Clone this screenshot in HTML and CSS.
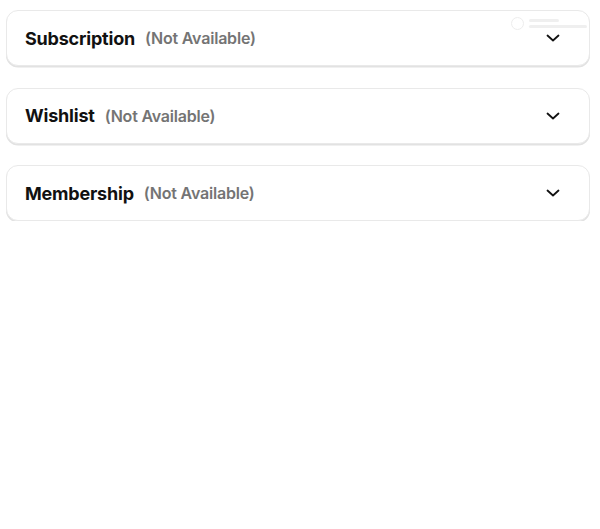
FILE: index.html
```html
<!DOCTYPE html>
<html lang="en">
<head>
<meta charset="utf-8">
<title>Account sections</title>
<link rel="stylesheet" href="styles.css">
</head>
<body>
<main class="list">
  <section class="card">
    <div class="card-head">
      <h2 class="title">Subscription</h2>
      <span class="status">(Not Available)</span>
      <svg class="chevron" width="14" height="8" viewBox="0 0 14 8" aria-hidden="true"><path d="M1.5 1.5 L7 6.5 L12.5 1.5" fill="none" stroke="#111" stroke-width="1.8" stroke-linecap="round" stroke-linejoin="round"/></svg>
    </div>
    <div class="watermark" aria-hidden="true">
      <span class="wm-icon"></span>
      <span class="wm-text"><span class="wm-line short"></span><span class="wm-line"></span></span>
    </div>
  </section>
  <section class="card">
    <div class="card-head">
      <h2 class="title">Wishlist</h2>
      <span class="status">(Not Available)</span>
      <svg class="chevron" width="14" height="8" viewBox="0 0 14 8" aria-hidden="true"><path d="M1.5 1.5 L7 6.5 L12.5 1.5" fill="none" stroke="#111" stroke-width="1.8" stroke-linecap="round" stroke-linejoin="round"/></svg>
    </div>
  </section>
  <section class="card">
    <div class="card-head">
      <h2 class="title">Membership</h2>
      <span class="status">(Not Available)</span>
      <svg class="chevron" width="14" height="8" viewBox="0 0 14 8" aria-hidden="true"><path d="M1.5 1.5 L7 6.5 L12.5 1.5" fill="none" stroke="#111" stroke-width="1.8" stroke-linecap="round" stroke-linejoin="round"/></svg>
    </div>
  </section>
</main>
</body>
</html>
```

FILE: styles.css
```css
* { box-sizing: border-box; }
html, body { margin: 0; background: #fff; }
body {
  font-family: Inter, "Liberation Sans", Arial, sans-serif;
  color: #111;
}
.list {
  display: flex;
  flex-direction: column;
  gap: 21.5px;
  padding: 10px 10px 0 6px;
}
.card {
  position: relative;
  border: 1px solid #e9e9e9;
  border-radius: 12px;
  background: #fff;
  box-shadow: 0 1.5px 0 #e2e2e2;
}
.card-head {
  display: flex;
  align-items: center;
  height: 54px;
  padding: 0 29px 0 18px;
}
.title {
  margin: 0;
  font-size: 18px;
  font-weight: 700;
  letter-spacing: -0.2px;
  color: #111;
}
.status {
  margin-left: 10px;
  font-size: 16px;
  font-weight: 600;
  color: #747474;
  letter-spacing: -0.2px;
}
.chevron {
  margin-left: auto;
  display: block;
}
.watermark {
  position: absolute;
  top: 6px;
  right: 2px;
  display: flex;
  align-items: center;
  gap: 5px;
  opacity: 0.6;
}
.wm-icon {
  width: 13px;
  height: 13px;
  border: 1.5px solid #e2e2e2;
  border-radius: 50%;
}
.wm-text {
  display: flex;
  flex-direction: column;
  gap: 3px;
}
.wm-line {
  width: 58px;
  height: 3px;
  background: #e6e6e6;
  border-radius: 2px;
}
.wm-line.short { width: 30px; }
```
